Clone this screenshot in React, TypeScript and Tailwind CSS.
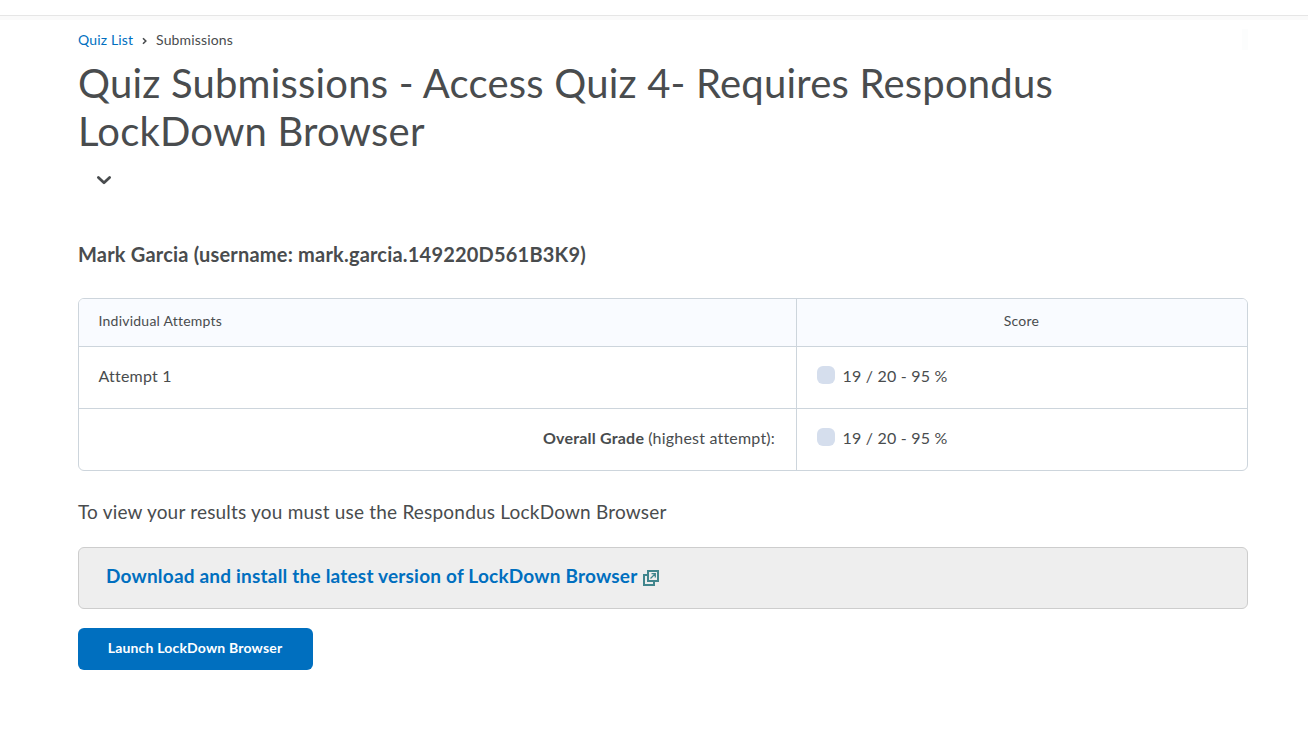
function Score() {
  return (
    <>
      <span className="mb-0.5 size-[18px] rounded-md bg-[#d5deed]" />
      <span>19 / 20 - 95 %</span>
    </>
  );
}

function NewWindowIcon() {
  return (
    <svg className="mt-1" width="16" height="16" viewBox="0 0 16 16" fill="none" stroke="#41868d" strokeWidth="2">
      <path d="M4 5H1v10h10v-3" />
      <path d="M5 1h10v10H5z" />
      <path d="M7.5 8.5 12 4M8.5 3.7h3.8v3.8" strokeWidth="1.3" />
    </svg>
  );
}

export default function App() {
  return (
    <div className="min-h-[729px] bg-white font-['Lato',sans-serif] tracking-[0.2px] text-[#494c4e]">
      <header className="h-4 border-b border-[#e6e6e6] bg-white shadow-[0_4px_0_#fafafa]" />
      <main className="ml-[78px] w-[1170px]">
        <nav className="flex h-[43px] items-center pt-1 text-[14px] tracking-[0.14px]">
          <a className="text-[#006fbf]">Quiz List</a>
          <svg className="mt-[3px] mr-2 ml-2" width="7" height="8" viewBox="0 0 7 8" fill="none" stroke="#494c4e" strokeWidth="1.6">
            <path d="M2 1.2 4.8 4 2 6.8" />
          </svg>
          <span>Submissions</span>
          <span className="ml-auto h-[21px] w-1.5 bg-[#fcfdfd]" />
        </nav>
        <h1 className="h-24 text-[40px] leading-[48px]">
          Quiz Submissions - Access Quiz 4- Requires Respondus
          <br />
          LockDown Browser
        </h1>
        <div className="flex h-[50px] items-center pl-[18px]">
          <svg width="16" height="10" viewBox="0 0 16 10" fill="none" stroke="#494c4e" strokeWidth="2.8" strokeLinecap="round" strokeLinejoin="round">
            <path d="M2.4 2.5 8 7.7 13.6 2.5" />
          </svg>
        </div>
        <h2 className="mt-[34px] text-[20px] leading-[30px] font-bold">
          Mark Garcia (username: mark.garcia.149220D561B3K9)
        </h2>
        <div className="mt-[29px] grid h-[173px] grid-cols-[718px_1fr] grid-rows-[48px_62px_1fr] overflow-hidden rounded-md border border-[#cdd5dc] text-[16px]">
          <div className="flex items-center border-r border-b border-[#cdd5dc] bg-[#f9fbff] pb-1 pl-[19.5px] text-[14px] tracking-[0.23px]">Individual Attempts</div>
          <div className="flex items-center justify-center border-b border-[#cdd5dc] bg-[#f9fbff] pr-px pb-1 text-[14px]">Score</div>
          <div className="flex items-center border-r border-b border-[#cdd5dc] pb-1 pl-[19.5px]">Attempt 1</div>
          <div className="flex items-center gap-[7.5px] border-b border-[#cdd5dc] pb-1 pl-5">
            <Score />
          </div>
          <div className="flex items-center justify-end gap-1 border-r border-[#cdd5dc] pr-[21px] pb-1">
            <b>Overall Grade</b> (highest attempt):
          </div>
          <div className="flex items-center gap-[7.5px] pb-1 pl-5">
            <Score />
          </div>
        </div>
        <p className="mt-[26px] text-[19px] leading-[30px]">To view your results you must use the Respondus LockDown Browser</p>
        <div className="mt-5 flex h-[62px] items-center gap-1.5 rounded-md border border-[#cdcdcd] bg-[#eeeeee] pb-1 pl-[27px] text-[19px] font-bold text-[#006fbf]">
          <a>Download and install the latest version of LockDown Browser</a>
          <NewWindowIcon />
        </div>
        <button className="mt-[19px] flex h-[42px] w-[235px] items-center justify-center rounded-md bg-[#006fbf] pr-px pb-1 text-[14px] font-bold tracking-[0.18px] text-white">
          Launch LockDown Browser
        </button>
      </main>
    </div>
  );
}
